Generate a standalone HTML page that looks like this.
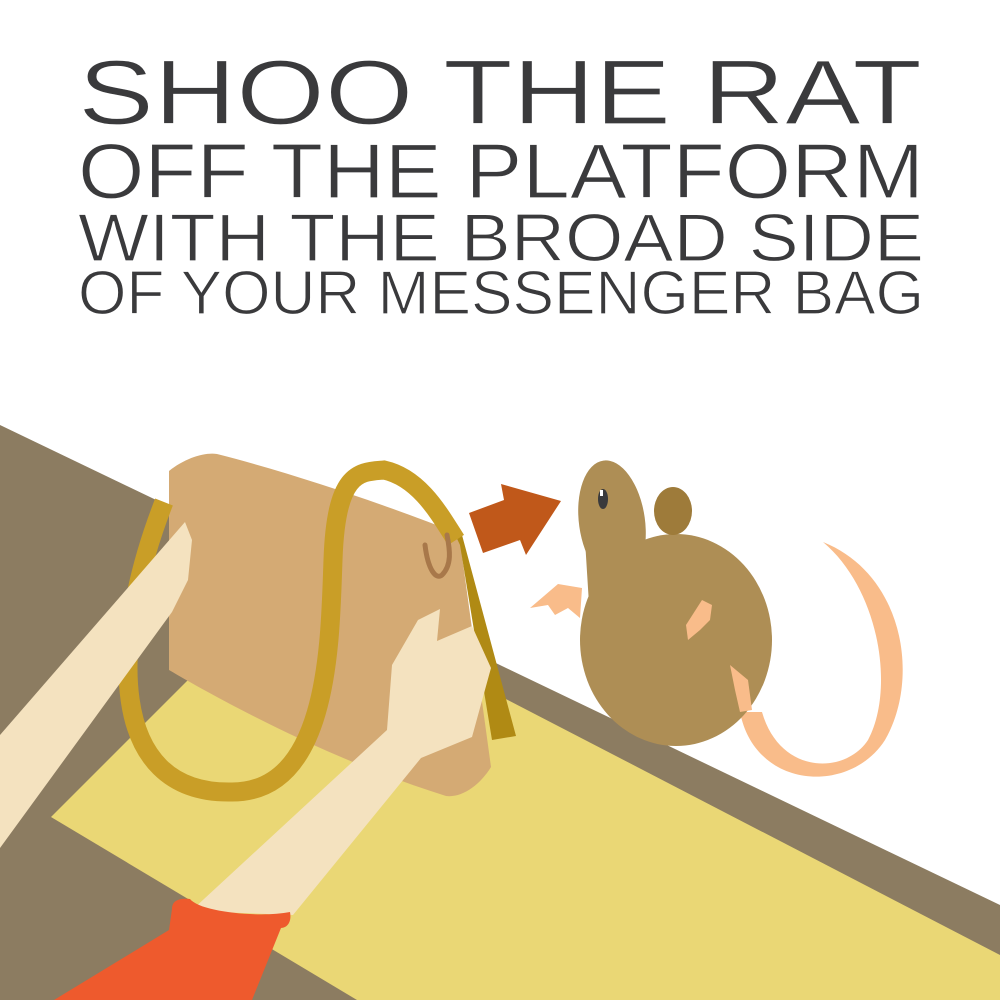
<!DOCTYPE html>
<html><head><meta charset="utf-8"><style>html,body{margin:0;padding:0;background:#fff;width:1000px;height:1000px;overflow:hidden}</style></head>
<body>
<svg width="1000" height="1000" viewBox="0 0 1000 1000" xmlns="http://www.w3.org/2000/svg">
<rect width="1000" height="1000" fill="#fff"/>
<g font-family="Liberation Sans, sans-serif" fill="#3a3a3c" stroke="#fff" stroke-width="1.2">
<text x="78" y="124" font-size="92" textLength="844" lengthAdjust="spacingAndGlyphs">SHOO THE RAT</text>
<text x="78" y="198" font-size="78" textLength="846" lengthAdjust="spacingAndGlyphs">OFF THE PLATFORM</text>
<text x="78" y="261" font-size="68" textLength="846" lengthAdjust="spacingAndGlyphs">WITH THE BROAD SIDE</text>
<text x="78" y="314" font-size="62" textLength="846" lengthAdjust="spacingAndGlyphs">OF YOUR MESSENGER BAG</text>
</g>
<polygon points="0,425 1000,905 1000,1000 0,1000" fill="#8c7c61"/>
<polygon points="51,817 284,584 1000,955 1000,1000 357,1000" fill="#ead775"/>
<!-- tail -->
<path d="M740,712 C755,790 850,795 885,740 C920,680 905,575 823,542 C880,590 895,690 868,740 C845,775 780,775 762,712 Z" fill="#f9bc8a"/>
<!-- bag -->
<path d="M169,471 C185,458 205,452 217,454 C300,475 400,510 459,534 L491,767 C480,785 462,798 446,796 C330,760 220,700 169,670 Z" fill="#d4aa74"/>
<polygon points="452,528 462,535 516,736 492,740 460,545" fill="#b08a14"/>
<!-- strap -->
<path d="M164,502 C110,640 105,795 232,792 C330,792 330,640 333,560 C336,470 360,472 384,470 C420,478 440,515 456,540" fill="none" stroke="#c99e27" stroke-width="19"/>
<path d="M425,545 C428,570 436,580 442,575 C452,565 450,550 447,535" fill="none" stroke="#a8784a" stroke-width="5" stroke-linecap="round"/>
<!-- left arm -->
<polygon points="0,735 165,545 185,522 192,540 188,580 172,612 0,848" fill="#f4e2bf"/>
<!-- right arm -->
<polygon points="191,911 387,730 392,665 418,620 440,609 437,641 472,626 491,668 472,737 421,758 293,915" fill="#f4e2bf"/>
<!-- sleeve -->
<path d="M172,909 C172,900 180,898 190,899 C200,912 260,918 290,912 C292,922 287,928 281,928 L252,1000 L54,1000 L169,930 Z" fill="#ee5a2d"/>
<!-- arrow -->
<polygon points="501,484 561,501 526,555 520,540 483,553 469,513 504,500" fill="#c0581a"/>
<!-- rat -->
<ellipse cx="676" cy="640" rx="96" ry="106" fill="#ae8e55"/>
<ellipse cx="612" cy="522" rx="33" ry="62" fill="#ae8e55" transform="rotate(-8 612 522)"/>
<polygon points="585,540 650,540 640,620 590,620" fill="#ae8e55"/>
<ellipse cx="673" cy="511" rx="19" ry="24" fill="#9e7b3a"/>
<ellipse cx="603" cy="499" rx="5" ry="10" fill="#3a3a3c"/>
<rect x="600" y="490" width="3" height="6" fill="#fff"/>
<path d="M558,584 L582,588 L580,618 L568,608 L555,615 L548,605 L530,608 Z" fill="#f9bc8a"/>
<path d="M702,600 L712,605 L710,620 L700,630 L688,640 L686,625 Z" fill="#f9bc8a"/>
<path d="M730,665 L748,680 L752,710 L740,712 L735,690 Z" fill="#f9bc8a"/>
</svg>
</body></html>
